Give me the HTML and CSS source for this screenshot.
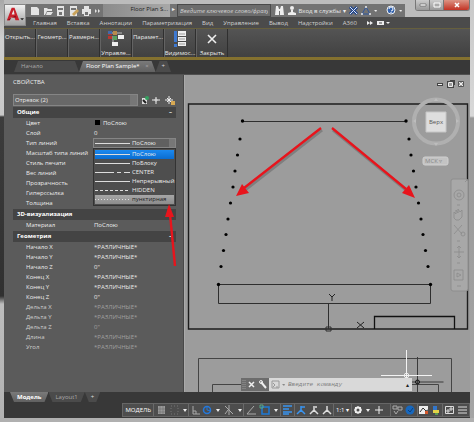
FILE: index.html
```html
<!DOCTYPE html>
<html lang="ru">
<head>
  <meta charset="UTF-8">
  <meta name="viewport" content="width=device-width, initial-scale=1.0">
  <title>Floor Plan Sample</title>
  <link rel="stylesheet" href="styles.css">
</head>
<body>
  <div class="window">
    <header class="top">
      <button class="app-btn" aria-label="Меню приложения">
        <svg width="20" height="20" viewBox="0 0 21 21">
          <path d="M2 16L7 3h3l5 13h-4l-1-3H6l-1 3z" fill="#c8202c"/>
          <path d="M7 10l2-5 1 5z" fill="#e9e9e9"/>
          <path d="M2 16l9-5 1 2H7l-2 3z" fill="#8c0f18"/>
          <path d="M16 14h4l-2 2z" fill="#222"/>
        </svg>
      </button>
      <div class="title-row">
        <div class="quick">
          <svg width="76" height="12" viewBox="0 0 76 12" fill="#e4e4e4">
            <path d="M4 2h6l2 2v6H4z"/>
            <path d="M17 3h3l1 1h4v2h-5l-2 4h-1zM20 7h6l-2 3h-5z"/>
            <path d="M30 1h7v10h-7zM31 3v2h5V3zM32 7v3h3V7z" fill-rule="evenodd"/>
            <path d="M43 1h7v10h-7zM44 3v2h5V3z" fill-rule="evenodd"/><path d="M45 9l5-5 2 2-5 5z" fill="#c9a25a"/>
            <path d="M57 1h5v3h2v5h-2v2h-5V9h-2V4h2zM58 7v3h3V7z" fill-rule="evenodd"/>
            <path d="M68 4l2 2-2 2zM71 4l2 2-2 2z"/>
          </svg>
        </div>
        <div class="doc-title">Floor Plan S...</div>
        <span class="play">▸</span>
        <input class="search" type="text" aria-label="Поиск" placeholder="Введите ключевое слово/фразу">
        <div class="account">
          <svg width="22" height="11" viewBox="0 0 22 11" fill="#eee">
            <path d="M2 1h2l1 3h1l1-3h2l1 9H6V6H5v4H1z"/>
            <circle cx="18" cy="3" r="2"/><path d="M17 5h2v2l3 1v2h-8V8l3-1z"/>
          </svg>
          <button class="login">Вход в службы ▾</button>
          <svg width="54" height="11" viewBox="0 0 54 11">
            <path d="M2 2l7 7M9 2L2 9" stroke="#21468f" stroke-width="3"/><path d="M2 2l7 7M9 2L2 9" stroke="#dce6f5"/>
            <path d="M18 2l4 7h-8z" fill="none" stroke="#2f58a0"/><circle cx="18" cy="2" r="1" fill="#eee"/><circle cx="14" cy="9" r="1" fill="#eee"/><circle cx="22" cy="9" r="1" fill="#eee"/>
            <path d="M26 5h3l-1 2zM51 5h3l-1 2z" fill="#eee"/>
            <circle cx="43" cy="5" r="4" fill="#3463ad" stroke="#eee"/><path d="M41 4q0-2 2-2t2 2-2 2M43 7v1" fill="none" stroke="#fff"/>
          </svg>
        </div>
        <div class="win-btns">
          <button aria-label="Свернуть"><svg width="8" height="6" viewBox="0 0 8 6"><path d="M1 2h6v2H1z" fill="#fff" stroke="#555" stroke-width=".6"/></svg></button>
          <button aria-label="Развернуть"><svg width="8" height="6" viewBox="0 0 8 6"><path d="M1 1h6v4H1z" fill="#aaa" stroke="#fff"/></svg></button>
          <button class="close" aria-label="Закрыть окно"><svg width="8" height="6" viewBox="0 0 8 6"><path d="M2 1l4 4M6 1L2 5" stroke="#fff" stroke-width="1.5"/></svg></button>
        </div>
      </div>
      <nav class="menu">
        <a href="#">Главная</a>
        <a href="#">Вставка</a>
        <a href="#">Аннотации</a>
        <a href="#">Параметризация</a>
        <a href="#">Вид</a>
        <a href="#">Управление</a>
        <a href="#">Вывод</a>
        <a href="#">Надстройки</a>
        <a href="#">A360</a>
        <svg width="24" height="8" viewBox="4 0 24 8" fill="#eee"><path d="M0 2l3 2-3 2zM3 2l3 2-3 2z" transform="translate(4 0)"/><path d="M14 2h7v4h-7zM23 3h4l-2 2z"/><path d="M16 4h3" stroke="#444"/></svg>
      </nav>
    </header>

    <div class="ribbon">
      <button class="panel">Открыть...</button>
      <button class="panel">Геометр...</button>
      <button class="panel">Размерн...</button>
      <button class="panel low">
        <svg width="20" height="18" viewBox="0 0 20 18">
          <path d="M4 3h12M7 6v8" stroke="#bbb"/>
          <path d="M2 1h4v4H2zM2 6h4v3H2z" fill="#b9362f"/><path d="M7 1h4v4H7z" fill="#b98a4b"/><path d="M7 6h4v4H7z" fill="#58a05c"/>
          <path d="M2 1h4v3H2z" fill="#4268aa"/><path d="M12 5h6v4h-6zM6 12h6v4H6z" fill="#eee"/>
        </svg>
        Управле...
      </button>
      <button class="panel">Парамет...</button>
      <button class="panel low">
        <svg width="20" height="18" viewBox="0 0 20 18">
          <path d="M4 1h3v11H4zM4 14h3v3H4z" fill="#3d78d0"/>
          <path d="M8 1h8v5H8zM8 7h8v4H8zM8 12h8v4H8z" fill="#eee"/><path d="M9 4h6M9 9h6M9 14h6" stroke="#999"/>
        </svg>
        Видимос...
      </button>
      <button class="panel low">
        <svg width="20" height="18" viewBox="0 0 20 18"><path d="M6 5l8 8M14 5l-8 8" stroke="#eee" stroke-width="1.6"/></svg>
        Закрыть
      </button>
    </div>

    <nav class="tabs">
      <a class="tab start" href="#">Начало</a>
      <a class="tab active" href="#">Floor Plan Sample* <span class="x">×</span></a>
      <a class="tab plus" href="#">+</a>
    </nav>

    <main class="work">
      <aside class="palette">
        <h1>СВОЙСТВА</h1>
        <div class="pick">
          <select class="object" aria-label="Объект"><option>Отрезок (2)</option></select>
          <svg width="36" height="11" viewBox="2 0 36 11" fill="none">
            <path d="M4 3h5v6H4z" fill="#ddd"/><path d="M5 5l3 3" stroke="#222" stroke-width="2"/><circle cx="9" cy="3" r="2" fill="#35a060"/>
            <path d="M18 2v7M14 5h8" stroke="#eee"/><circle cx="18" cy="5" r="1" fill="#555" stroke="#eee"/>
            <path d="M31 1v8M27 5h8M29 3l4 4M33 3l-4 4" stroke="#eee"/><path d="M33 6h4v4h-4z" fill="#d8a953"/>
          </svg>
        </div>
        <section>
          <h2>Общие <span>–</span></h2>
          <table>
            <tr><th>Цвет</th><td><i class="swatch"></i>ПоСлою</td></tr>
            <tr><th>Слой</th><td>0</td></tr>
            <tr>
              <th><label for="ltype">Тип линий</label></th>
              <td class="type-cell">
                <select id="ltype" class="ltype"><option>ПоСлою</option></select>
                <ul class="list">
                  <li class="on"><svg class="line" viewBox="0 0 35 3"><path d="M0 1.500h35"/></svg>ПоСлою</li>
                  <li><svg class="line" viewBox="0 0 35 3"><path d="M0 1.500h35"/></svg>ПоБлоку</li>
                  <li><svg class="line" viewBox="0 0 35 3"><path d="M0 1.500h19m3 0h4m3 0h6"/></svg>CENTER</li>
                  <li><svg class="line" viewBox="0 0 35 3"><path d="M0 1.500h35"/></svg>Непрерывный</li>
                  <li><svg class="line" viewBox="0 0 35 3"><path d="M0 1.500h35" stroke-dasharray="3 2"/></svg>HIDDEN</li>
                  <li class="hover"><svg class="line" viewBox="0 0 35 3"><path d="M0 1.500h35" stroke-dasharray="1 2"/></svg>пунктирная</li>
                </ul>
              </td>
            </tr>
            <tr><th>Масштаб типа линий</th><td></td></tr>
            <tr><th>Стиль печати</th><td></td></tr>
            <tr><th>Вес линий</th><td></td></tr>
            <tr><th>Прозрачность</th><td></td></tr>
            <tr><th>Гиперссылка</th><td></td></tr>
            <tr><th>Толщина</th><td></td></tr>
          </table>
        </section>
        <section>
          <h2>3D-визуализация</h2>
          <table>
            <tr><th>Материал</th><td>ПоСлою</td></tr>
          </table>
        </section>
        <section>
          <h2>Геометрия <span>–</span></h2>
          <table>
            <tr><th>Начало X</th><td>*РАЗЛИЧНЫЕ*</td></tr>
            <tr><th>Начало Y</th><td>*РАЗЛИЧНЫЕ*</td></tr>
            <tr><th>Начало Z</th><td>0"</td></tr>
            <tr><th>Конец X</th><td>*РАЗЛИЧНЫЕ*</td></tr>
            <tr><th>Конец Y</th><td>*РАЗЛИЧНЫЕ*</td></tr>
            <tr><th>Конец Z</th><td>0"</td></tr>
            <tr class="off"><th>Дельта X</th><td>*РАЗЛИЧНЫЕ*</td></tr>
            <tr class="off"><th>Дельта Y</th><td>*РАЗЛИЧНЫЕ*</td></tr>
            <tr class="off"><th>Дельта Z</th><td>0"</td></tr>
            <tr class="off"><th>Длина</th><td>*РАЗЛИЧНЫЕ*</td></tr>
            <tr class="off"><th>Угол</th><td>*РАЗЛИЧНЫЕ*</td></tr>
          </table>
        </section>
        <!-- pointer to the dashed line type -->
        <svg class="hint" width="14" height="64" viewBox="0 0 14 64">
          <path d="M11 62L6 10" stroke="#e8141c" stroke-width="2.4"/><path d="M5 0l5 13H1z" fill="#e8141c"/>
        </svg>
      </aside>

      <div class="canvas">
        <svg class="drawing" viewBox="185 75 285 317" preserveAspectRatio="xMinYMin slice" fill="none">
          <!-- sheet frame -->
          <path d="M188.500 104H467.500V329H188.500z" stroke="#1d1d1d" stroke-width="1.4"/>
          <path d="M242 121.500H406M218.500 303.500V284.500H430.500V303.500z" stroke="#2e2e2e"/>
          <path d="M374.500 329V316.500H454.500V329" stroke="#111" stroke-width="1.3"/>
          <path d="M328.500 303V329M326 327h5v4h-5z" stroke="#2e2e2e"/>
          <path d="M329 294l3 3 3-3M332 297v4M357 322l7 6M364 322l-7 6" stroke="#222"/>
          <path d="M198.500 392V358.500H451.500V392M212.500 392V384.500H385M412 384.500H438.500V392" stroke="#444"/>
          <!-- dotted lines -->
          <g fill="#000">
            <circle cx="242.500" cy="121" r="1.700"/><circle cx="240" cy="139" r="1.600"/><circle cx="237.500" cy="155" r="1.600"/><circle cx="235" cy="171" r="1.600"/><circle cx="233" cy="187" r="1.600"/><circle cx="230.500" cy="203" r="1.600"/><circle cx="228" cy="219" r="1.600"/><circle cx="226" cy="234.500" r="1.600"/><circle cx="223.500" cy="250.500" r="1.600"/><circle cx="221" cy="266.500" r="1.600"/><circle cx="218.500" cy="284.500" r="1.700"/>
            <circle cx="406" cy="121" r="1.700"/><circle cx="409" cy="139" r="1.600"/><circle cx="411" cy="155" r="1.600"/><circle cx="413.500" cy="171" r="1.600"/><circle cx="416" cy="187" r="1.600"/><circle cx="418.500" cy="203" r="1.600"/><circle cx="421" cy="219" r="1.600"/><circle cx="423" cy="234.500" r="1.600"/><circle cx="425.500" cy="250.500" r="1.600"/><circle cx="428" cy="266.500" r="1.600"/><circle cx="430.500" cy="284.500" r="1.700"/>
          </g>
          <!-- arrows -->
          <path d="M322 130l-77 60M333 130l73 60" stroke="#555" stroke-opacity=".4" stroke-width="3"/>
          <path d="M321 128l-77 60M332 128l74 61" stroke="#e8141c" stroke-width="2.300"/>
          <path d="M236 196l6-12 7 9zM415 198l-13-5 7-8z" fill="#e8141c"/>
          <!-- document buttons -->
          <g stroke="#eee"><path d="M437 84.500h6" stroke="#444" stroke-width="3"/><path d="M438 84.500h4"/><path d="M448 82h5v5h-5zM450 81h4v4" stroke="#444" stroke-width="2"/><path d="M448.500 82.500h4v4h-4z"/><path d="M458.500 81.500h5v5h-5z" stroke="#555"/><path d="M459 82l4 4M463 82l-4 4"/></g>
          <!-- view cube -->
          <circle cx="436" cy="121.500" r="22" stroke="#b0b0b0" stroke-width="4"/>
          <path d="M434 101l2-3 2 3zM434 143l2 3 2-3zM416 119l-3 2 3 2zM456 119l3 2-3 2z" fill="#bdbdbd"/>
          <path d="M426 112h20v20h-20z" fill="#dedede" stroke="#c6c6c6"/>
          <text x="436" y="124" class="cube">Верх</text>
          <rect x="423" y="157" width="25" height="8" rx="2" fill="#c3c3c3" stroke="#d0d0d0"/>
          <text x="425" y="163" class="ucs">МСК ▿</text>
          <!-- navigation bar -->
          <rect x="451" y="179" width="17" height="112" rx="2" fill="#a8a8a8" stroke="#8e8e8e"/>
          <g stroke="#8c8c8c" stroke-width=".8"><circle cx="459" cy="195" r="5"/><circle cx="459" cy="195" r="2"/><path d="M454 218v-6l2 2v-4l2 3v-4l2 3 2-2v7l-3 3h-3zM454 225l8 9M462 225l-8 9"/><circle cx="463" cy="234" r="2"/><path d="M454 252h10M459 246v12M457 248l2-2 2 2M457 256l2 2 2-2M454 270h9v10h-9zM457 273l4 2-4 2zM457 286h4M465 182l2-2M457 205h3M457 241h3M457 263h3"/></g>
          <!-- crosshair -->
          <path d="M392 387.500h10M391.500 382h52M417.500 357v35" stroke="#3a3a3a"/>
          <circle cx="417.500" cy="382" r="2" stroke="#111"/>
          <path d="M381 375.500h51M406.500 350v29" stroke="#f3f3f3"/><circle cx="406.500" cy="375.500" r="2.300" stroke="#eee"/>
        </svg>
        <form class="command">
          <svg width="28" height="13" viewBox="0 0 28 13" stroke="#eee" fill="none"><path d="M2 2v9M4 2v9" stroke="#999" stroke-dasharray="1 1"/><path d="M8 4l5 5M13 4L8 9" stroke-width="1.500"/><path d="M20 4l5 6" stroke-width="2"/><circle cx="20" cy="4" r="1.500"/></svg>
          <label for="cmd"><svg width="19" height="13" viewBox="0 0 19 13" fill="none" stroke="#999"><path d="M3 3h7v7H3zM4 5l2 2-2 2M7 9h2"/><path d="M13 6h3l-1 2z" fill="#888" stroke="none"/></svg></label>
          <input id="cmd" type="text" placeholder="Введите команду">
          <span>▴</span>
        </form>
      </div>
    </main>

    <nav class="tabs layouts">
      <a class="tab active" href="#">Модель</a>
      <a class="tab" href="#">Layout1</a>
      <a class="tab plus" href="#">+</a>
    </nav>

    <footer class="status">
      <div class="tools">
        <button class="model">МОДЕЛЬ</button>
        <button aria-label="Сетка и привязка"><svg width="34" height="12" viewBox="0 0 34 12"><path d="M4 2h7v8H4z" fill="#999"/><path d="M6 2v8M9 2v8M4 5h7M4 8h7" stroke="#666" stroke-width=".5"/><path d="M17 2h7v8h-7z" fill="none" stroke="#777" stroke-dasharray="1 2"/><path d="M29 5h4l-2 3z" fill="#eee"/></svg></button>
        <button aria-label="Орто и отслеживание"><svg width="54" height="12" viewBox="0 0 54 12" fill="none" stroke="#aaa"><path d="M4 2v8h7M4 7h3v3"/><circle cx="18" cy="6" r="3.500" stroke="#2378dc" stroke-width="1.500"/><path d="M18 2v4l4 1" stroke="#2378dc"/><path d="M27 5h4l-2 3zM49 5h4l-2 3z" fill="#eee" stroke="none"/><path d="M36 2l8 8M40 1v10M36 10l3-4"/></svg></button>
        <button aria-label="Объектная привязка"><svg width="36" height="12" viewBox="0 0 36 12" fill="none"><path d="M10 2L3 10h9" stroke="#aaa"/><path d="M18 3h7v7h-7z" stroke="#1c79d8" stroke-width="1.500"/><path d="M16 1h3v3h-3z" stroke="#58a887"/><path d="M30 5h4l-2 3z" fill="#eee"/></svg></button>
        <button aria-label="Вес линий"><svg width="13" height="12" viewBox="0 0 13 12"><path d="M2 2h9M2 5h6M2 8h9M2 10h6" stroke="#3994f0" stroke-width="1.500"/></svg></button>
        <button aria-label="Аннотации"><svg width="38" height="12" viewBox="0 0 38 12" fill="none" stroke-width="1.500"><path d="M6 2v4l-4 4M6 6l4 4M6 3h4" stroke="#3994f0"/><path d="M19 2v4l-4 4M19 6l4 4M20 3h2M32 2v4l-4 4M32 6l4 4" stroke="#ddd"/></svg></button>
        <button class="scale">1:1 ▾</button>
        <button aria-label="Настройки"><svg width="38" height="12" viewBox="0 0 38 12" fill="none" stroke="#eee"><circle cx="6" cy="6" r="2.500" stroke-width="2"/><path d="M6 2v1M6 9v1M2 6h1M9 6h1M3 3l1 1M8 8l1 1M9 3L8 4M4 8L3 9"/><path d="M14 5h4l-2 3z" fill="#eee" stroke="none"/><path d="M27 2v8M23 6h8"/></svg></button>
        <button aria-label="Изоляция"><svg width="26" height="12" viewBox="0 0 26 12" fill="none"><path d="M2 2h4v3H2zM7 3h4v3H7zM3 7l2 3 2-3" stroke="#aaa"/><circle cx="19" cy="6" r="4.500" fill="#1767bd"/><path d="M17 6l2 2 3-4" stroke="#0a3f7c"/></svg></button>
        <button aria-label="Производительность"><svg width="24" height="12" viewBox="0 0 24 12"><path d="M1 2h9v8H1z" fill="#eee"/><path d="M2 8l3-4 3 3 2-1" fill="none" stroke="#333"/><path d="M7 7h3v3H7z" fill="#d5582c"/><path d="M15 2h4v4h-4z" fill="#3276ca"/><path d="M15 6h6v3h-6z" fill="#e4d348"/><path d="M17 9h3v2h-3z" fill="#5a9b50"/></svg></button>
        <button aria-label="Меню"><svg width="26" height="12" viewBox="0 0 26 12" fill="none" stroke="#ddd"><path d="M2.500 2.500h8v7h-8zM4 6h2v2H4zM7 4h2v2H7zM15 3h9M15 6h9M15 9h9"/></svg></button>
      </div>
    </footer>
  </div>
</body>
</html>
```

FILE: styles.css
```css
* {
  box-sizing: border-box;
}
body {
  margin: 0;
  min-height: 100vh;
  font-family: "Open Sans", "Noto Sans", sans-serif;
  font-size: 6px;
  line-height: 10px;
  color: #ececec;
}
button, input, select {
  font: inherit;
  color: inherit;
  margin: 0;
  padding: 0;
  border: 0;
  border-radius: 0;
  background: none;
  appearance: none;
  min-width: 0;
}
a {
  color: inherit;
  text-decoration: none;
}
svg {
  display: block;
  flex: none;
}
.window {
  min-height: 100vh;
  display: flex;
  flex-direction: column;
  padding: 0 4px 4px;
  background: linear-gradient(#b0b0b0, #b0b0b0) bottom / 100% 4px no-repeat,
    linear-gradient(#c9c9c9 0, #d8d8d8 116px, #999 118px, #a5a5a5) right / 4px 100% no-repeat,
    linear-gradient(#a8a8a8 0, #d0d0d0 40px, #c8c8c8 115px, #3c3c3c 117px, #303030 296px, #bdbdbd 304px, #b2b2b2);
}

/* title and menu */
.top {
  display: grid;
  grid-template-columns: 22px minmax(0, 1fr);
  grid-template-rows: 17px 11px;
  background: linear-gradient(#bcbcbc 17px, #4b4b4b 17px);
}
.app-btn {
  grid-row: 1 / 3;
  margin-top: 4px;
  border: 1px solid #888;
  background: linear-gradient(#f2f2f2, #a0a0a0);
  height: 22px;
}
.title-row {
  display: flex;
  align-items: flex-end;
}
.quick, .account {
  display: flex;
  align-items: center;
  height: 13px;
  background: #737373;
}
.quick {
  padding-left: 1px;
  flex: none;
}
.doc-title {
  flex: 0 0 67px;
  height: 13px;
  padding-right: 2px;
  text-align: right;
  color: #222;
  background: linear-gradient(90deg, #8b8b8b, #a8a8a8);
}
.play {
  flex: 0 0 7px;
  height: 13px;
  text-align: center;
  background: #747474;
}
.search {
  flex: 1 1 0;
  height: 13px;
  padding: 0 2px;
  border: 1px solid #4a4a4a;
  background: #6c6c6c;
  font-style: italic;
}
.search::placeholder {
  color: #d0d0d0;
}
.account {
  flex: 0 0 134px;
  justify-content: space-between;
  padding: 0 3px;
}
.login {
  white-space: nowrap;
}
.win-btns {
  display: flex;
  flex: none;
  align-self: flex-start;
  margin-left: 10px;
  border: 1px solid #777;
  border-top: 0;
  border-radius: 0 0 3px 3px;
  overflow: hidden;
}
.win-btns button {
  display: flex;
  align-items: center;
  justify-content: center;
  width: 14px;
  height: 10px;
  background: linear-gradient(#ccc, #999);
  border-right: 1px solid #777;
}
.win-btns .close {
  width: 25px;
  border: 0;
  background: linear-gradient(#dc9484, #c33324);
}
.menu {
  display: flex;
  align-items: center;
  gap: 10px;
  padding-left: 7px;
  background: #4b4b4b;
  color: #d0d0d0;
  white-space: nowrap;
}

/* ribbon */
.ribbon {
  display: flex;
  height: 32px;
  background: linear-gradient(#545454, #414141);
  border-top: 1px solid #665f3d;
  border-bottom: 3px solid #84712f;
}
.panel {
  width: 32px;
  padding-top: 3px;
  display: flex;
  flex-direction: column;
  align-items: center;
  border-right: 1px solid #2f2f2f;
  border-left: 1px solid #636363;
  white-space: nowrap;
}
.panel.low {
  padding-top: 1px;
}

/* tabs */
.tabs {
  display: flex;
  align-items: flex-end;
  height: 15px;
  padding: 0 0 2px 10px;
  background: #383838;
  border-bottom: 1px solid #505050;
}
.tab {
  height: 11px;
  padding: 0 7px;
  background: #4b4b4b;
  color: #aaa;
  clip-path: polygon(4px 0, calc(100% - 4px) 0, 100% 100%, 0 100%);
}
.tab.start {
  width: 65px;
}
.tab.active {
  background: linear-gradient(#7a7a7a, #616161);
  color: #fff;
}
.tab .x {
  margin-left: 4px;
  color: #aaa;
}
.tab.plus {
  padding: 0 6px;
  color: #ddd;
}

/* properties palette */
.work {
  flex: 1;
  display: flex;
  min-height: 317px;
}
.palette {
  position: relative;
  flex: 0 0 180px;
  padding: 2px 7px 0 9px;
  background: #5b5b5b;
  border-right: 1px solid #484848;
}
.palette h1 {
  margin: 0 0 7px;
  font-size: 6px;
  font-weight: 400;
}
.pick {
  display: flex;
  align-items: center;
  gap: 2px;
  margin-bottom: 1px;
}
.object, .ltype {
  background: linear-gradient(#777, #777) right / 7px 100% no-repeat #686868;
  border: 1px solid #858585;
}
.object {
  flex: 1;
  height: 12px;
  padding-left: 1px;
}
.palette h2 {
  display: flex;
  justify-content: space-between;
  height: 11px;
  margin: 0;
  padding: 0 4px;
  font-size: 6px;
  line-height: 11px;
  font-weight: 700;
  color: #fff;
  background: #444;
}
.palette section {
  margin-bottom: 1px;
}
.palette table {
  width: 100%;
  border-collapse: collapse;
  table-layout: fixed;
}
.palette th, .palette td {
  height: 10px;
  padding: 0;
  font-weight: 400;
  text-align: left;
  white-space: nowrap;
}
.palette th {
  width: 80px;
  padding-left: 13px;
}
.palette td {
  padding-left: 1px;
}
.palette .off td {
  color: #a0a0a0;
}
.palette .off th {
  color: #cfcfcf;
}
.swatch {
  display: inline-block;
  width: 5px;
  height: 5px;
  margin: 0 3px 0 1px;
  background: #000;
}
.palette .type-cell {
  position: relative;
  padding: 0;
}
.ltype {
  display: block;
  width: 100%;
  height: 10px;
  line-height: 8px;
  padding-left: 38px;
  background: linear-gradient(#ddd, #ddd) 1px 4px / 35px 1px no-repeat,
    linear-gradient(#777, #777) right / 6px 100% no-repeat #606060;
}
.list {
  position: absolute;
  z-index: 1;
  top: 10px;
  left: 0;
  right: 0;
  margin: 0;
  padding: 1px;
  list-style: none;
  background: #4e4e4e;
  border: 1px solid #333;
}
.list li {
  display: flex;
  align-items: center;
  gap: 2px;
  height: 9px;
  line-height: 9px;
}
.list .on {
  background: linear-gradient(#1c8af0, #0a6cd0);
}
.list .hover {
  color: #222;
  background: linear-gradient(#a6a6a6, #8c8c8c);
}
.line {
  width: 35px;
  height: 3px;
  stroke: #ddd;
}
.hint {
  position: absolute;
  z-index: 2;
  top: 129px;
  left: 160px;
}

/* model space */
.canvas {
  position: relative;
  flex: 1;
  min-width: 0;
  overflow: hidden;
  background: #9c9c9c;
  border-left: 1px solid #aaa;
}
.drawing {
  width: 100%;
}
.cube, .ucs {
  font-size: 6px;
  fill: #555;
}
.cube {
  text-anchor: middle;
}
.ucs {
  fill: #888;
}
.command {
  position: absolute;
  left: 56px;
  right: 58px;
  bottom: 1px;
  height: 13px;
  display: flex;
  align-items: center;
  background: linear-gradient(90deg, #6c6c6c 28px, #d9d9d9 28px);
  color: #222;
}
.command input {
  flex: 1;
  font-family: "Liberation Mono", monospace;
  font-style: italic;
}
.command input::placeholder {
  color: #808080;
}
.command span {
  padding-right: 3px;
}

/* layout tabs and status bar */
.layouts {
  align-items: flex-start;
  height: 11px;
  padding: 0 0 0 6px;
  border: 0;
}
.layouts .tab {
  height: 10px;
  clip-path: polygon(0 0, 100% 0, calc(100% - 4px) 100%, 4px 100%);
}
.layouts .active {
  font-weight: 700;
}
.status {
  display: flex;
  justify-content: flex-end;
  padding-bottom: 1px;
  background: #383838;
}
.tools {
  display: flex;
  height: 14px;
  background: #4d4d4d;
  border: 1px solid #666;
}
.tools button {
  border-right: 1px solid #6a6a6a;
}
.tools .model, .tools .scale {
  padding: 0 2px;
  color: #fff;
}
.tools button:last-child {
  border: 0;
}
```
